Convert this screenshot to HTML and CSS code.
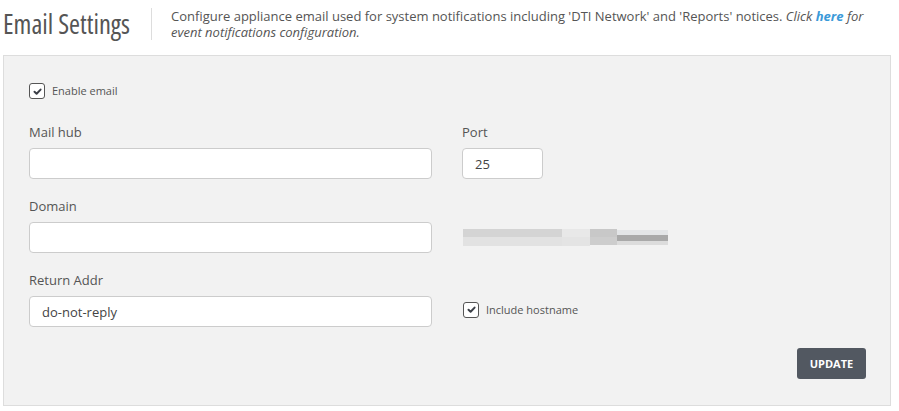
FILE: index.html
```html
<!DOCTYPE html>
<html>
<head>
<meta charset="utf-8">
<link rel="stylesheet" href="styles.css">
</head>
<body>
<div class="header">
  <h1 class="title">Email Settings</h1>
  <div class="divider"></div>
  <p class="desc">Configure appliance email used for system notifications including 'DTI Network' and 'Reports' notices. <em>Click <a href="#">here</a> for event notifications configuration.</em></p>
</div>
<div class="panel">
  <label class="check enable">
    <span class="box"><svg viewBox="0 0 16 16" width="16" height="16"><path d="M4.3 8.3 L6.9 10.8 L11.8 5.6" fill="none" stroke="#3b3f47" stroke-width="2.4" stroke-linecap="round" stroke-linejoin="round"/></svg></span>
    <span>Enable email</span>
  </label>
  <div class="row">
    <div class="field main">
      <label class="lbl">Mail hub</label>
      <input class="input" type="text" value="">
    </div>
    <div class="field">
      <label class="lbl">Port</label>
      <input class="input port" type="text" value="25">
    </div>
  </div>
  <div class="row">
    <div class="field main">
      <label class="lbl">Domain</label>
      <input class="input" type="text" value="">
    </div>
    <div class="side">
      <div class="blur">
        <div class="seg s1"></div>
        <div class="seg s2"></div>
        <div class="seg s3"></div>
        <div class="seg s4"></div>
      </div>
    </div>
  </div>
  <div class="row">
    <div class="field main">
      <label class="lbl">Return Addr</label>
      <input class="input" type="text" value="do-not-reply">
    </div>
    <div class="side side-up">
      <label class="check">
        <span class="box"><svg viewBox="0 0 16 16" width="16" height="16"><path d="M4.3 8.3 L6.9 10.8 L11.8 5.6" fill="none" stroke="#3b3f47" stroke-width="2.4" stroke-linecap="round" stroke-linejoin="round"/></svg></span>
        <span>Include hostname</span>
      </label>
    </div>
  </div>
  <div class="actions">
    <button class="btn">UPDATE</button>
  </div>
</div>
</body>
</html>
```

FILE: styles.css
```css
* { box-sizing: border-box; }
html, body { margin: 0; background: #fff; }
body {
  padding: 0 8px 0 3px;
  font-family: "Open Sans", "DejaVu Sans", sans-serif;
  color: #555;
}
.header {
  display: flex;
  align-items: flex-start;
  padding-top: 8px;
  height: 55px;
}
.title {
  margin: 0;
  font-size: 26.5px;
  font-stretch: 87.5%;
  font-weight: 400;
  line-height: 32px;
  color: #555;
  white-space: nowrap;
}
.divider {
  width: 1px;
  height: 32px;
  background: #ddd;
  margin: 0 19px 0 21px;
}
.desc {
  margin: 0;
  font-size: 13px;
  line-height: 16px;
  color: #555;
  flex: 1;
}
.desc em { font-style: italic; }
.desc a { color: #3a9ad9; font-weight: 700; text-decoration: none; }
.panel {
  border: 1px solid #ddd;
  background: #f2f2f2;
  padding: 27px 24px 26px 25px;
}
.check {
  display: flex;
  align-items: center;
  gap: 7px;
  font-size: 11px;
  color: #555;
  line-height: 16px;
}
.box {
  width: 16px;
  height: 16px;
  border: 1.5px solid #555;
  border-radius: 3px;
  background: #fff;
  display: flex;
  align-items: center;
  justify-content: center;
}
.box svg { display: block; width: 13px; height: 13px; }
.enable { margin-bottom: 24px; }
.row {
  display: flex;
  gap: 30px;
  margin-bottom: 18px;
}
.field { display: flex; flex-direction: column; }
.field.main { width: 403px; }
.lbl {
  font-size: 13px;
  line-height: 18px;
  margin-bottom: 7px;
  color: #555;
}
.input {
  height: 31px;
  border: 1px solid #ccc;
  border-radius: 4px;
  background: #fff;
  padding: 0 12px;
  font-family: "Open Sans", "DejaVu Sans", sans-serif;
  font-size: 13px;
  color: #444;
  outline: none;
}
.port { width: 81px; }
.side {
  align-self: flex-end;
  height: 31px;
  display: flex;
  align-items: center;
  padding-left: 1px;
}
.side-up { padding-bottom: 4px; }
.blur {
  display: flex;
  height: 18px;
  width: 205px;
  margin-top: -1px;
}
.seg { height: 100%; }
.s1 {
  width: 99px;
  background: linear-gradient(to bottom, #f2f2f2 0 1px, #d4d4d4 1px 9px, #e2e2e2 9px 18px);
}
.s2 {
  width: 28px;
  background: linear-gradient(to bottom, #f2f2f2 0 1px, #e8e8e8 1px 9px, #e4e4e4 9px 18px);
}
.s3 {
  width: 27px;
  background: linear-gradient(to bottom, #f2f2f2 0 1px, #c8c8c8 1px 9px, #cdcdcd 9px 17px, #f2f2f2 17px);
}
.s4 {
  width: 51px;
  background: linear-gradient(to bottom, #f2f2f2 0 2px, #e3e5e7 2px 7px, #a9a9a9 7px 13px, #dcdcdc 13px 17px, #f2f2f2 17px);
}
.actions {
  display: flex;
  justify-content: flex-end;
  padding-top: 3px;
}
.btn {
  height: 31px;
  width: 69px;
  border: none;
  border-radius: 3px;
  background: #525861;
  color: #fff;
  font-family: "Open Sans", "DejaVu Sans", sans-serif;
  font-weight: 700;
  font-size: 11px;
  padding: 0;
}
```
